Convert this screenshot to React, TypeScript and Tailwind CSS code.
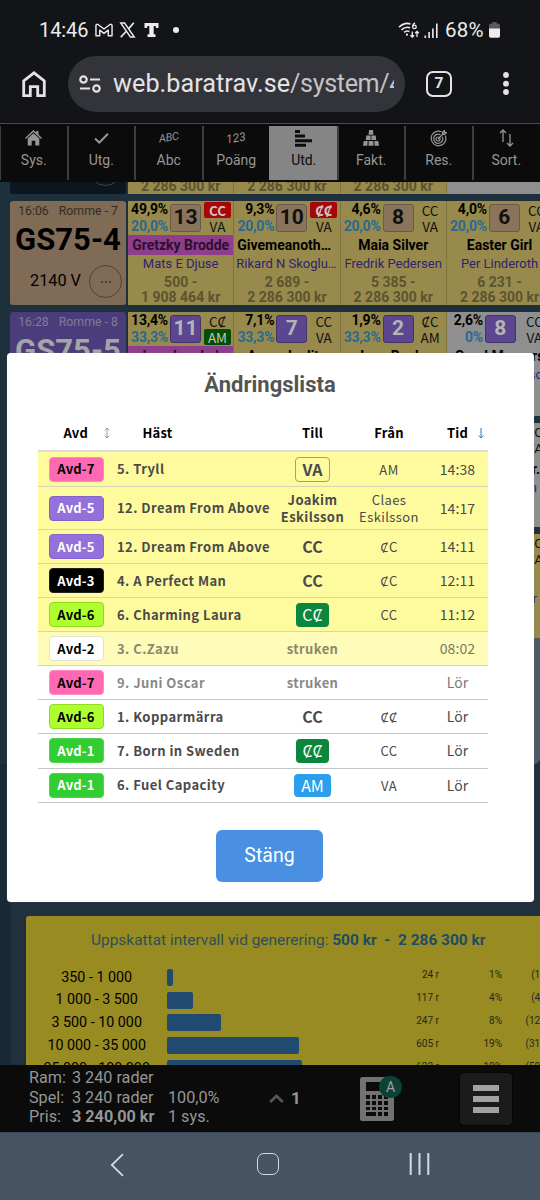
import type { ReactNode } from "react";
import clsx from "clsx";

interface Horse {
  pct: string;
  sys: string;
  nr: string;
  shoe: string;
  cart: string;
  name: string;
  driver: string;
  low?: string;
  high?: string;
  shoeMark?: boolean;
  cartMark?: boolean;
  pink?: boolean;
  out?: boolean;
}

interface Race {
  time: string;
  track: string;
  label: string;
  dist: string;
  card: string;
  box: string;
  horses: Horse[];
}

const races: Race[] = [
  {
    time: "16:06",
    track: "Romme - 7",
    label: "GS75-4",
    dist: "2140 V",
    card: "bg-[#7f6b56] text-black",
    box: "bg-[#8a745c] text-[#111] border-[#6b5a47]",
    horses: [
      { pct: "49,9%", sys: "20,0%", nr: "13", shoe: "CC", cart: "VA", name: "Gretzky Brodde", driver: "Mats E Djuse", low: "500 -", high: "1 908 464 kr", shoeMark: true, pink: true },
      { pct: "9,3%", sys: "20,0%", nr: "10", shoe: "ȻȻ", cart: "VA", name: "Givemeanotherone", driver: "Rikard N Skoglund", low: "2 689 -", high: "2 286 300 kr", shoeMark: true },
      { pct: "4,6%", sys: "20,0%", nr: "8", shoe: "CC", cart: "VA", name: "Maia Silver", driver: "Fredrik Pedersen", low: "5 385 -", high: "2 286 300 kr" },
      { pct: "4,0%", sys: "20,0%", nr: "6", shoe: "CC", cart: "VA", name: "Easter Girl", driver: "Per Linderoth", low: "6 231 -", high: "2 286 300 kr" },
    ],
  },
  {
    time: "16:28",
    track: "Romme - 8",
    label: "GS75-5",
    dist: "1640 A",
    card: "bg-[#4b3d7c] text-[#a5a5a5]",
    box: "bg-[#5c4690] text-[#b5b5b5] border-[#42336b]",
    horses: [
      { pct: "13,4%", sys: "33,3%", nr: "11", shoe: "CȻ", cart: "AM", name: "Juan Lando k", driver: "", cartMark: true, pink: true },
      { pct: "7,1%", sys: "33,3%", nr: "7", shoe: "CC", cart: "VA", name: "Amandualito", driver: "" },
      { pct: "1,9%", sys: "33,3%", nr: "2", shoe: "ȻC", cart: "AM", name: "Juan Banko", driver: "" },
      { pct: "2,6%", sys: "0%", nr: "8", shoe: "CC", cart: "VA", name: "Good Mornars", driver: "Joakim Eskilsson", out: true },
    ],
  },
];

const changes = [
  { avd: "Avd-7", tone: "bg-[#ff69b4] text-black border-[#ff8ac5]", horse: "5. Tryll", to: "VA", kind: "outline", from: "AM", time: "14:38", h: "h-[35px]", fresh: true },
  { avd: "Avd-5", tone: "bg-[#9370db] text-white border-[#8462cc]", horse: "12. Dream From Above", to: "Joakim Eskilsson", kind: "name", from: "Claes Eskilsson", time: "14:17", h: "h-[43px]", fresh: true },
  { avd: "Avd-5", tone: "bg-[#9370db] text-white border-[#8462cc]", horse: "12. Dream From Above", to: "CC", kind: "bold", from: "ȻC", time: "14:11", h: "h-[34px]", fresh: true },
  { avd: "Avd-3", tone: "bg-black text-white border-[#222]", horse: "4. A Perfect Man", to: "CC", kind: "bold", from: "ȻC", time: "12:11", h: "h-[34px]", fresh: true },
  { avd: "Avd-6", tone: "bg-[#adff2f] text-black border-[#8fdc1e]", horse: "6. Charming Laura", to: "CȻ", kind: "green", from: "CC", time: "11:12", h: "h-[34px]", fresh: true },
  { avd: "Avd-2", tone: "bg-white text-black border-[#e2e2d0]", horse: "3. C.Zazu", to: "struken", kind: "name", from: "", time: "08:02", h: "h-[34px]", fresh: true, scratched: true },
  { avd: "Avd-7", tone: "bg-[#ff69b4] text-black border-[#ff8ac5]", horse: "9. Juni Oscar", to: "struken", kind: "name", from: "", time: "Lör", h: "h-[34.2px]", scratched: true },
  { avd: "Avd-6", tone: "bg-[#adff2f] text-black border-[#8fdc1e]", horse: "1. Kopparmärra", to: "CC", kind: "bold", from: "ȻȻ", time: "Lör", h: "h-[34.2px]" },
  { avd: "Avd-1", tone: "bg-[#32cd32] text-white border-[#4bd84b]", horse: "7. Born in Sweden", to: "ȻȻ", kind: "green", from: "CC", time: "Lör", h: "h-[34.2px]" },
  { avd: "Avd-1", tone: "bg-[#32cd32] text-white border-[#4bd84b]", horse: "6. Fuel Capacity", to: "AM", kind: "blue", from: "VA", time: "Lör", h: "h-[34.2px]" },
];

const toStyles: Record<string, string> = {
  outline: "h-[25px] w-[35px] rounded border border-[#a5a35c] text-[16px] font-bold",
  name: "w-[70px] justify-center text-center text-[13px] font-bold tracking-[0.4px]",
  bold: "text-[16px] font-bold",
  green: "h-6 w-[33px] rounded bg-[#0a873c] text-[16px] text-white",
  blue: "h-[23px] w-[37px] rounded bg-[#2b9fec] text-[16px] text-white",
};

const intervals = [
  { range: "350 - 1 000", width: 6, rows: "24 r", pct: "1%", acc: "(1%)" },
  { range: "1 000 - 3 500", width: 26, rows: "117 r", pct: "4%", acc: "(4%)" },
  { range: "3 500 - 10 000", width: 54, rows: "247 r", pct: "8%", acc: "(12%)" },
  { range: "10 000 - 35 000", width: 132, rows: "605 r", pct: "19%", acc: "(31%)" },
  { range: "35 000 - 100 000", width: 135, rows: "622 r", pct: "19%", acc: "(50%)" },
];

function StatusBar() {
  return (
    <div className="flex h-[56px] items-center pt-1 pl-[39px] text-[#ececee]">
      <span className="w-[50px] text-[20px] leading-6 tracking-[-0.1px]">14:46</span>
      <svg className="ml-[6px]" width="18" height="14" viewBox="0 0 19 14" fill="none" stroke="currentColor" strokeWidth="1.5" strokeLinejoin="round">
        <path d="M1 13V2.200C1 .8 2.600.7 3.500 1.400L9.500 6l6-4.600C16.400.7 18 .8 18 2.200V13h-4V7.200L9.500 10.600 5 7.200V13z" />
      </svg>
      <svg className="ml-[6px]" width="17" height="16" viewBox="0 0 16 16" fill="none" stroke="currentColor" strokeWidth="1.4">
        <path d="M1.200 1h3.900l9.700 14h-3.900z" />
        <path d="M14.300.8L9 6.900M6.700 9.200L1.300 15.200" strokeWidth="1.700" />
      </svg>
      <svg className="ml-[8px]" width="15" height="14" viewBox="0 0 15 14" fill="currentColor">
        <path d="M.5 0h14v5h-2.400l-.6-2H9.700v8.200h1.800V14h-8v-2.800h1.800V3H3.500l-.6 2H.5z" />
      </svg>
      <span className="ml-[14px] h-[6px] w-[6px] rounded-full bg-current" />
      <svg className="ml-[219px]" width="22" height="16" viewBox="0 0 23 17" fill="none" stroke="currentColor" strokeWidth="1.700">
        <path d="M1 5.500C4.500 2 9 .8 13 2M3.500 8.300c2.600-2.400 6-3.200 9.200-2.200M6.300 11c1.600-1.400 3.600-1.800 5.600-1" />
        <circle cx="9.300" cy="13.500" r="1.200" fill="currentColor" stroke="none" />
        <path d="M18 1c-1.600.6-2.500 2-2.500 3.800" strokeWidth="1.400" />
        <circle cx="17.300" cy="5.200" r="1.900" strokeWidth="1.400" />
        <path d="M15 10v6M13 14l2 2 2-2M20 16v-6M18 12l2-2 2 2" strokeWidth="1.400" />
      </svg>
      <svg className="ml-[4px]" width="15" height="15" viewBox="0 0 15 15" fill="currentColor">
        <path d="M.5 12.500h1.600V15H.5zM4.300 9h1.600v6H4.300zM8.100 5.500h1.600V15H8.100zM12 .5h1.600V15H12z" />
      </svg>
      <span className="ml-[6px] w-[43px] text-[20.500px] leading-6 tracking-[0.2px]">68%</span>
      <svg className="ml-px" width="11" height="16" viewBox="0 0 11 16">
        <path d="M3.500 0h4v1.500h1.500a2 2 0 0 1 2 2V7H0V3.500a2 2 0 0 1 2-2h1.500z" fill="#5a5a5e" />
        <path d="M0 6.500h11V14a1.800 1.800 0 0 1-1.800 1.800H1.800A1.800 1.800 0 0 1 0 14z" fill="currentColor" />
      </svg>
    </div>
  );
}

function AddressBar() {
  return (
    <div className="flex h-[67px] items-start text-[#e3e3e6]">
      <svg className="mt-[14px] ml-[21px]" width="26" height="28" viewBox="0 0 26 28" fill="none" stroke="currentColor" strokeWidth="2.800">
        <path d="M2.700 25.600V11L13 2.800 23.300 11v14.600h-6.600v-9h-7.400v9z" />
      </svg>
      <div className="ml-[21px] flex h-[56px] w-[337px] items-center overflow-hidden rounded-full bg-[#333439] pl-[11px]">
        <svg className="shrink-0" width="22" height="18" viewBox="0 0 22 18" fill="none" stroke="currentColor" strokeWidth="2.200">
          <circle cx="4.500" cy="4.500" r="3.200" />
          <path d="M11 4.500h10M1 13.500h10" />
          <circle cx="17.500" cy="13.500" r="3.200" />
        </svg>
        <span className="ml-[12px] w-[281px] overflow-hidden text-[25.200px] leading-8 tracking-[0.05px] whitespace-nowrap">
          web.baratrav.se<span className="tracking-[-0.4px] text-[#c3c3c8]">/system/4</span>
        </span>
      </div>
      <div className="mt-[15px] ml-[21px] flex h-[26px] w-[26px] items-center justify-center rounded-[7px] border-[2.500px] border-current text-[15.500px] font-bold">7</div>
      <svg className="mt-[16px] ml-[51px]" width="6" height="24" viewBox="0 0 6 24" fill="currentColor">
        <circle cx="3" cy="3" r="2.900" />
        <circle cx="3" cy="11.700" r="2.900" />
        <circle cx="3" cy="20" r="2.900" />
      </svg>
    </div>
  );
}

function Tab({ label, active, children }: { label: string; active?: boolean; children: ReactNode }) {
  return (
    <div
      className={clsx(
        "flex w-[67.5px] shrink-0 flex-col items-center border-l-2 pt-[3px]",
        active ? "border-[#858585] bg-[#858585] text-[#0c0c0c]" : "border-[#3e3e3e] text-[#969696]"
      )}
    >
      <div className="flex h-[18px] items-center">{children}</div>
      <span className="mt-[3px] text-[14px] leading-5">{label}</span>
    </div>
  );
}

function Tabs() {
  return (
    <div className="h-[59px] overflow-hidden border-t-[1.500px] border-[#4a4a4a] bg-[#0b0b0b] pt-[2px]">
      <div className="-ml-px flex h-[54px]">
        <Tab label="Sys.">
          <svg width="17" height="16" viewBox="0 0 17 16" fill="currentColor">
            <path d="M8.500 0l2.700 2.500V1h2.200v3.600L17 8l-.9 1-7.600-7L.9 9 0 8z" />
            <path d="M8.500 3.200L14.300 8.500V15.500H10.300V10.800H6.700V15.500H2.700V8.500z" />
          </svg>
        </Tab>
        <Tab label="Utg.">
          <svg width="15" height="11" viewBox="0 0 15 11" fill="none" stroke="currentColor" strokeWidth="2">
            <path d="M1 5.500l4.300 4L14 .8" />
          </svg>
        </Tab>
        <Tab label="Abc">
          <span className="-rotate-[9deg] text-[11px] tracking-[-0.3px] italic">ABC</span>
        </Tab>
        <Tab label="Poäng">
          <span className="-rotate-[9deg] text-[12px] italic">123</span>
        </Tab>
        <Tab label="Utd." active>
          <svg width="17" height="17" viewBox="0 0 17 17" fill="currentColor">
            <path d="M0 0h5v3H0zM0 4.600h10v3H0zM0 9.200h17v3H0zM0 13.800h11v3H0z" />
          </svg>
        </Tab>
        <Tab label="Fakt.">
          <svg width="16" height="16" viewBox="0 0 16 16" fill="currentColor">
            <path d="M6 0h4l.4 4.700H5.600zM3.300 5.600h4.300v4.500H2.800zM8.400 5.600h4.300l.5 4.500H8.400zM.7 11h4l-.3 4.700H0zM5.700 11h4.600l.2 4.700h-5zM11.300 11h4l.7 4.700h-4.400z" />
          </svg>
        </Tab>
        <Tab label="Res.">
          <svg width="17" height="17" viewBox="0 0 17 17" fill="none" stroke="currentColor" strokeWidth="1.200">
            <path d="M11.500 1.800A7.300 7.300 0 1 0 15.200 5.500" />
            <path d="M10.300 4.600A4.600 4.600 0 1 0 12.400 6.700" />
            <circle cx="8" cy="9" r="2" />
            <path d="M8 9l6.500-6.500M12.500 4.500V2.300L14.500.3v2.200h2.200l-2 2z" />
          </svg>
        </Tab>
        <Tab label="Sort.">
          <svg width="15" height="18" viewBox="0 0 15 18" fill="none" stroke="currentColor" strokeWidth="1.300">
            <path d="M4 13V1M1 4l3-3 3 3M11 5v12M8 14l3 3 3-3" />
          </svg>
        </Tab>
      </div>
    </div>
  );
}

function HorseCell({ horse, box }: { horse: Horse; box: string }) {
  return (
    <div className={clsx("w-[106.300px] shrink-0 border-r border-[#7f7340]", horse.out ? "bg-[#8f8f8f]" : "bg-[#978a4c]")}>
      <div className="flex h-[34px]">
        <div className={clsx("shrink-0 text-right text-[14px] leading-[16.500px] font-bold tracking-[-0.2px]", horse.out ? "w-[36px]" : "w-[40px]")}>
          <div className="text-black">{horse.pct}</div>
          <div className="text-[#266a96]">{horse.sys}</div>
        </div>
        <div className={clsx("mt-[3px] ml-[2px] flex h-7 w-[31px] shrink-0 items-center justify-center rounded-[3px] border text-[21px] font-bold", box)}>
          {horse.nr}
        </div>
        <div
          className={clsx(
            "flex w-[27px] shrink-0 flex-col pt-px text-center font-['Noto_Sans_CJK_SC','Noto_Sans',sans-serif] text-[13.500px] leading-4 text-[#111]",
            horse.out ? "ml-[5px]" : "ml-[3px]"
          )}
        >
          <span className={clsx(horse.shoeMark && "rounded-[2px] bg-[#a80507] font-bold text-[#c4c4c4]")}>{horse.shoe}</span>
          <span className={clsx(horse.cartMark && "rounded-[2px] bg-[#024f02] text-[#c4c4c4]")}>{horse.cart}</span>
        </div>
      </div>
      <div className={clsx("h-5 truncate px-[3px] text-center text-[14px] leading-5 font-bold", horse.pink ? "bg-[#8f3d8d] text-[#2b1030]" : "text-black")}>
        {horse.name}
      </div>
      <div className="h-[17px] truncate px-[2px] text-center text-[13px] leading-[17px] text-[#2f2273]">{horse.driver}</div>
      <div className="mt-[3px] text-center text-[14px] leading-[14.500px] font-bold text-[#5b542f]">
        <div>{horse.low}</div>
        <div>{horse.high}</div>
      </div>
    </div>
  );
}

function RaceRow({ race }: { race: Race }) {
  return (
    <div className="mb-[7px] flex h-[104px] shrink-0 pl-[10px]">
      <div className={clsx("mr-[2px] w-[116px] shrink-0 rounded-[3px]", race.card)}>
        <div className="flex justify-center gap-[10px] pt-[2px] text-[12.300px] leading-[17px] whitespace-nowrap opacity-60">
          <span>{race.time}</span>
          <span>{race.track}</span>
        </div>
        <div className="text-center text-[31px] leading-[40px] font-bold">{race.label}</div>
        <div className="mt-[5px] flex items-center justify-end pr-[4px]">
          <span className="mr-[8px] text-[16.300px]">{race.dist}</span>
          <span className="flex h-[33px] w-[33px] items-center justify-center gap-[2px] rounded-full border border-[#51432f]">
            <i className="h-[2px] w-[2px] rounded-full bg-[#3a3024]" />
            <i className="h-[2px] w-[2px] rounded-full bg-[#3a3024]" />
            <i className="h-[2px] w-[2px] rounded-full bg-[#3a3024]" />
          </span>
        </div>
      </div>
      {race.horses.map((horse) => (
        <HorseCell key={horse.nr} horse={horse} box={race.box} />
      ))}
    </div>
  );
}

// Rows covered by the dialog, only the outer edge of the last cell is visible
function EdgeRow({ className, shoe, cart, name, driver }: { className: string; shoe: string; cart: string; name: string; driver: string }) {
  return (
    <div className="mb-[7px] flex h-[104px] shrink-0 justify-end">
      <div className={clsx("w-[93px] pt-px text-right text-[13.500px] leading-4", className)}>
        <div className="-mr-[3px] text-[#111]">{shoe}</div>
        <div className="-mr-[3px] text-[#111]">{cart}</div>
        <div className="mt-[3px] h-5 text-[14px] leading-5 font-bold text-black">{name}</div>
        <div className="pr-[3px] text-[#2f2273]">{driver}</div>
      </div>
    </div>
  );
}

function IntervalPanel() {
  return (
    <div className="ml-[15px] h-[160px] rounded-tl-[3px] bg-[#988b21] pt-[14px]">
      <div className="pl-[65px] text-[15.450px] leading-5 whitespace-nowrap text-[#2f4f55]">
        Uppskattat intervall vid generering: <b className="text-[#1f4b66]">500 kr&nbsp; -&nbsp; 2 286 300 kr</b>
      </div>
      <div className="mt-[16px] flex flex-col">
        {intervals.map((it) => (
          <div key={it.range} className="flex h-[22.800px] items-center">
            <span className="w-[141.400px] shrink-0 text-center text-[14.300px] text-black">{it.range}</span>
            <div className="w-[214.600px] shrink-0">
              <div className="h-[17px] rounded-[2px] bg-[#204a70]" style={{ width: it.width }} />
            </div>
            <div className="flex pb-[5px] text-[10px] text-[#25291a]">
              <span className="w-[57px] text-right">{it.rows}</span>
              <span className="w-[63px] text-right">{it.pct}</span>
              <span className="w-[49px] shrink-0 text-right">{it.acc}</span>
            </div>
          </div>
        ))}
      </div>
    </div>
  );
}

function BottomBar() {
  return (
    <div className="flex h-[67px] shrink-0 bg-[#0b0b0b] text-[#969696]">
      <div className="grid w-[230px] shrink-0 grid-cols-[43px_96px_1fr] content-start pt-[3px] pl-[29px] text-[16.200px] leading-[19.500px] whitespace-nowrap">
        <span>Ram:</span>
        <span>3 240 rader</span>
        <span />
        <span>Spel:</span>
        <span>3 240 rader</span>
        <span>100,0%</span>
        <span>Pris:</span>
        <b>3 240,00 kr</b>
        <span>1 sys.</span>
      </div>
      <div className="ml-[39px] flex items-center gap-[7px]">
        <svg width="15" height="9" viewBox="0 0 15 9" fill="none" stroke="#555" strokeWidth="2.800">
          <path d="M1.200 8l6.300-6 6.300 6" />
        </svg>
        <span className="w-[10px] text-[17px] font-bold">1</span>
      </div>
      <div className="relative mt-[12px] ml-[59px]">
        <svg width="34" height="44" viewBox="0 0 34 44">
          <rect width="34" height="44" rx="2.500" fill="#727272" />
          <path
            d="M6 5h22v9H6zM6 18h4v4H6zM12 18h4v4h-4zM18 18h4v4h-4zM24 18h4v4h-4zM6 24h4v4H6zM12 24h4v4h-4zM18 24h4v4h-4zM24 24h4v4h-4zM6 30h4v3H6zM12 30h4v3h-4zM18 30h4v3h-4zM24 30h4v3h-4zM6 35h10v4H6zM18 35h4v4h-4zM24 35h4v4h-4z"
            fill="#0b0b0b"
          />
        </svg>
        <span className="absolute -top-px left-[19px] flex h-[22px] w-[23px] items-center justify-center rounded-full bg-[#0c4235] text-[14px] text-[#a0a0a0]">A</span>
      </div>
      <div className="mt-[7px] ml-[64.500px] flex h-[54px] w-[54px] shrink-0 flex-col items-center justify-center gap-[5px] rounded-[5px] border border-[#050505] bg-[#1b1b1b]">
        <span className="h-[6px] w-[26px] bg-[#a2a2a2]" />
        <span className="h-[6px] w-[26px] bg-[#a2a2a2]" />
        <span className="h-[6px] w-[26px] bg-[#a2a2a2]" />
      </div>
    </div>
  );
}

function AndroidNav() {
  return (
    <div className="flex h-[68px] shrink-0 border-t border-[#39495a] bg-[#465362] pt-[20px] text-[#d5dae0]">
      <svg className="ml-[110px]" width="14" height="24" viewBox="0 0 14 24" fill="none" stroke="currentColor" strokeWidth="1.800">
        <path d="M13 1.200L1.800 12 13 22.800" />
      </svg>
      <span className="ml-[133px] h-[22px] w-[22px] rounded-[7px] border-[1.800px] border-current" />
      <svg className="ml-[130px]" width="22" height="22" viewBox="0 0 22 22" stroke="currentColor" strokeWidth="2">
        <path d="M1.700 0v22M10.500 0v22M19.300 0v22" />
      </svg>
    </div>
  );
}

function ChangesDialog() {
  return (
    <div className="absolute top-[353px] left-[6.500px] h-[549px] w-[527px] rounded-[4px] bg-white px-[31.500px] shadow-[0_0_1px_#888]">
      <h2 className="pt-[18px] text-center text-[22px] leading-7 font-bold text-[#545454]">Ändringslista</h2>
      <div className="mt-[16px] w-[450px] font-['Noto_Sans_CJK_SC','Noto_Sans',sans-serif] text-[13px]">
        <div className="grid h-[37px] grid-cols-[75px_161px_77px_76px_61px] items-center border-b-2 border-[#dcdcdc] pt-px font-bold tracking-[0.2px] text-black">
          <span className="flex items-center justify-end pr-[3px]">
            Avd
            <svg className="ml-[16px]" width="6" height="12" viewBox="0 0 6 12" fill="none" stroke="#999">
              <path d="M3 1v10M.7 3.300L3 1l2.300 2.300M.7 8.700L3 11l2.300-2.300" />
            </svg>
          </span>
          <span className="pl-[29.500px]">Häst</span>
          <span className="text-center">Till</span>
          <span className="text-center">Från</span>
          <span className="flex items-center justify-end pr-[4px]">
            Tid
            <svg className="ml-[10px]" width="6" height="12" viewBox="0 0 6 12" fill="none" stroke="#2f78c4">
              <path d="M3 1v10M.7 8.500L3 11l2.300-2.500" />
            </svg>
          </span>
        </div>
        {changes.map((c, i) => (
          <div
            key={i}
            className={clsx(
              "grid grid-cols-[75px_161px_77px_76px_61px] items-center border-b text-[#4a4a4a]",
              c.h,
              c.fresh ? "border-[#d8d5b6]" : "border-[#c6c6c6]",
              c.fresh && (c.scratched ? "bg-[#fefcb8]" : "bg-[#fefb9f]")
            )}
          >
            <span className={clsx("ml-[10.500px] flex h-[25px] w-[55px] items-center justify-center rounded border font-bold tracking-[0.2px]", c.tone)}>{c.avd}</span>
            <span className={clsx("pl-1 font-bold tracking-[0.45px] whitespace-nowrap", c.scratched && "opacity-65")}>{c.horse}</span>
            <span className={clsx("flex justify-center", c.scratched && "opacity-65")}>
              <span className={clsx("flex items-center justify-center leading-[17px]", toStyles[c.kind])}>{c.to}</span>
            </span>
            <span className="px-1 text-center leading-[17px] tracking-[0.4px]">{c.from}</span>
            <span className={clsx("text-center text-[14px] tracking-[0.1px]", c.scratched && "opacity-75")}>{c.time}</span>
          </div>
        ))}
      </div>
      <div className="mt-[27px] flex justify-center pr-[1px]">
        <button className="h-[52px] w-[107px] rounded-md bg-[#4990e2] text-[19.500px] text-white">Stäng</button>
      </div>
    </div>
  );
}

export default function App() {
  return (
    <div className="relative flex h-[1200px] w-[540px] flex-col overflow-hidden bg-[#131417] font-[Roboto,sans-serif]">
      <StatusBar />
      <AddressBar />
      <Tabs />
      <div className="flex h-[883px] shrink-0 flex-col overflow-hidden bg-[#1e303c]">
        <div className="mb-[7px] flex h-[12px] shrink-0 overflow-hidden pl-[10px]">
          <div className="relative mr-[2px] w-[116px] shrink-0 overflow-hidden rounded-b-[3px] bg-[#0c161f]">
            <span className="absolute -top-[29px] left-[79px] h-[33px] w-[33px] rounded-full border border-[#3c4650]" />
          </div>
          {[0, 1, 2, 3].map((n) => (
            <div
              key={n}
              className={clsx(
                "w-[106.300px] shrink-0 border-r border-[#7f7340] text-center text-[14px] leading-[8px] font-bold text-[#5b542f]",
                n === 3 ? "bg-[#8f8f8f]" : "bg-[#978a4c]"
              )}
            >
              {n < 3 && "2 286 300 kr"}
            </div>
          ))}
        </div>
        {races.map((race) => (
          <RaceRow key={race.label} race={race} />
        ))}
        <EdgeRow className="bg-[#8f8f8f]" shoe="CC" cart="VA" name="Mr." driver="Lin" />
        <EdgeRow className="bg-[#978a4c]" shoe="CC" cart="VA" name="" driver="er" />
        <div className="-mt-[7px] ml-auto h-[126px] w-[100px] shrink-0 rounded-br-[6px] bg-[#4d5963]" />
        <div className="shrink-0 border-l-[11px] border-[#192a37] bg-[#22303d] pt-[152px]">
          <IntervalPanel />
        </div>
      </div>
      <BottomBar />
      <AndroidNav />
      <ChangesDialog />
    </div>
  );
}
